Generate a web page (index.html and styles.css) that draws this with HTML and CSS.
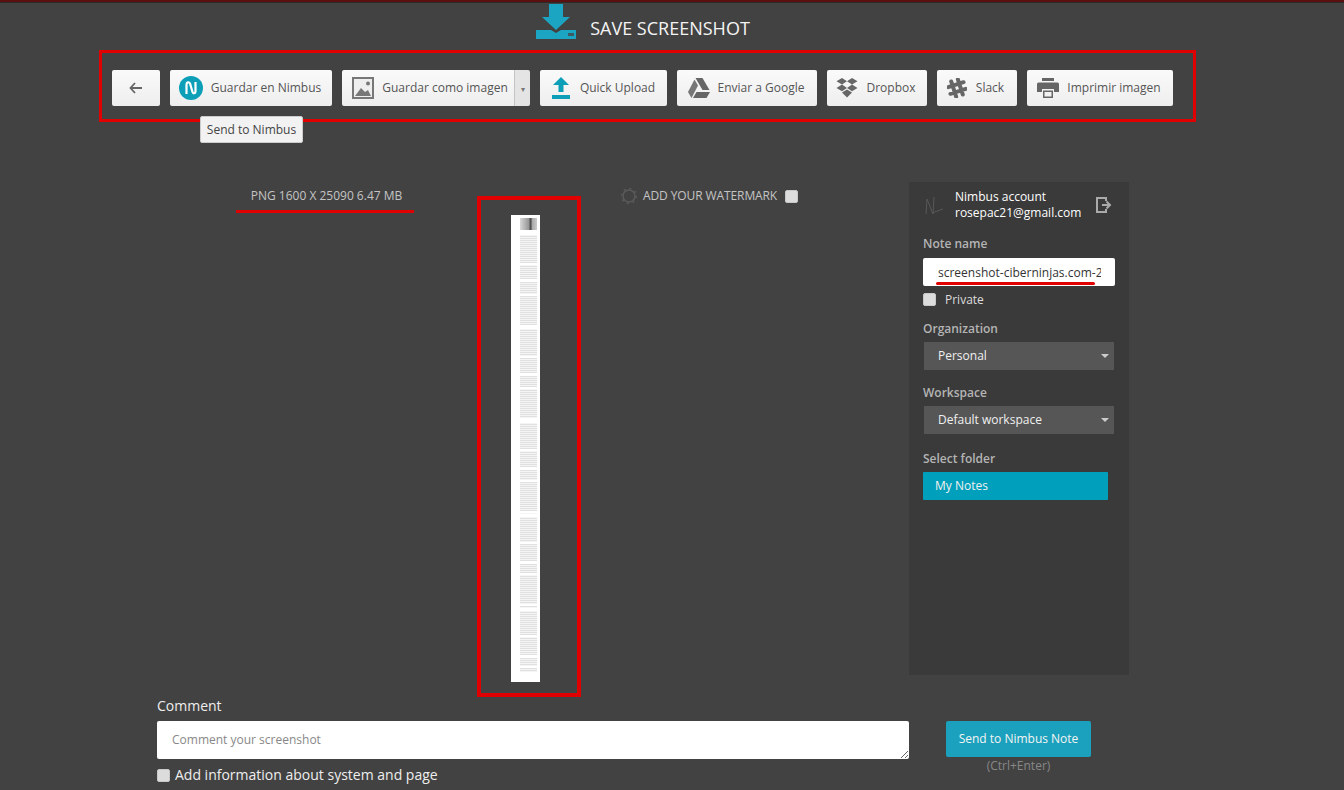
FILE: index.html
```html
<!DOCTYPE html>
<html lang="en">
<head>
    <meta charset="UTF-8">
    <meta name="viewport" content="width=device-width, initial-scale=1.0">
    <title>Save Screenshot</title>
    <link rel="stylesheet" href="styles.css">
</head>
<body>
    <div class="topline"></div>

    <header class="page-head">
        <svg class="head-icon" viewBox="0 0 40 36" width="40" height="36">
            <path d="M13 0h14v13h7L20 26 6 13h7z" fill="#1ba5c3"/>
            <path d="M0 26h15l5 3 5-3h15v9H0z" fill="#1ba5c3"/>
            <rect x="32" y="29" width="6" height="3" fill="#3c5a62"/>
        </svg>
        <h1>SAVE SCREENSHOT</h1>
    </header>

    <nav class="toolbar">
        <button class="btn btn-back">
            <svg viewBox="0 0 14 12" width="14" height="12"><path d="M6 1L1.500 6 6 11M2 6h11" fill="none" stroke="#666" stroke-width="1.800"/></svg>
        </button>
        <div class="tip-wrap">
            <button class="btn btn-nimbus">
                <svg viewBox="0 0 24 24" width="24" height="24">
                    <circle cx="12" cy="12" r="12" fill="#0d9fb8"/>
                    <path d="M7.500 18V8.500c0-2.500 2.500-3 3.500-1l2.500 8.500c.6 2 3 1.500 3-.5V6" fill="none" stroke="#fff" stroke-width="2.200"/>
                </svg>
                Guardar en Nimbus
            </button>
            <span class="tooltip">Send to Nimbus</span>
        </div>
        <div class="btn-split">
            <button class="btn btn-image">
                <svg viewBox="0 0 22 22" width="22" height="22">
                    <path d="M0 0h22v22H0z" fill="#777"/>
                    <path d="M2 2h18v18H2z" fill="#eee"/>
                    <path d="M3 19l6-8 4 4 3-2 3 6z" fill="#777"/>
                    <circle cx="16" cy="6.500" r="2" fill="#777"/>
                </svg>
                Guardar como imagen
            </button>
            <button class="btn-caret">&#9662;</button>
        </div>
        <button class="btn btn-upload">
            <svg viewBox="0 0 18 22" width="18" height="22"><path d="M9 0l8 8h-5.500v7h-5V8H1z" fill="#0d9fb8"/><rect y="18" width="18" height="4" fill="#0d9fb8"/></svg>
            Quick Upload
        </button>
        <button class="btn btn-google">
            <svg viewBox="0 0 22 20" width="22" height="20">
                <path d="M7.500 0h7l7 12h-7z" fill="#666"/>
                <path d="M6.500 1.500L10 7.500 3.500 20 0 14z" fill="#777"/>
                <path d="M5 20l3.500-6H22l-3.500 6z" fill="#666"/>
            </svg>
            Enviar a Google
        </button>
        <button class="btn btn-dropbox">
            <svg viewBox="0 0 22 20" width="22" height="20">
                <path d="M6 0l5 3.300-5 3.300-5.500-3.300zM16 0l5.500 3.300-5.500 3.300-5-3.300zM6 6.600l5 3.300-5 3.300-5.500-3.300zM16 6.600l5.500 3.300-5.500 3.300-5-3.300zM6 14.500l5-3 5 3-5 5z" fill="#666"/>
            </svg>
            Dropbox
        </button>
        <button class="btn btn-slack">
            <svg viewBox="0 0 20 20" width="20" height="20">
                <g transform="rotate(-18 10 10)" fill="none" stroke="#666" stroke-width="4" stroke-linecap="round">
                    <path d="M6.500 2v16M13.500 2v16M2 6.500h16M2 13.500h16"/>
                </g>
            </svg>
            Slack
        </button>
        <button class="btn btn-print">
            <svg viewBox="0 0 22 20" width="22" height="20">
                <path d="M5 0h12v3H5z" fill="#666"/>
                <path d="M1.500 4.500h19a1.500 1.500 0 0 1 1.500 1.500v8h-5v-3H5v3H0V6a1.500 1.500 0 0 1 1.500-1.500z" fill="#666"/>
                <path d="M6 12.500h10V20H6z" fill="#666"/>
                <path d="M7.500 14h7v4.500h-7z" fill="#f2f2f2"/>
            </svg>
            Imprimir imagen
        </button>
    </nav>

    <main class="workspace">
        <div class="file-info">
            <span>PNG 1600 X 25090 6.47 MB</span>
        </div>

        <div class="preview">
            <div class="thumb">
                <div class="thumb-hero"></div>
                <div class="thumb-text"></div>
            </div>
        </div>

        <div class="watermark">
            <svg viewBox="0 0 16 16" width="16" height="16">
                <circle cx="8" cy="8" r="6" fill="none" stroke="#5a5a5a" stroke-width="1.500"/>
                <circle cx="8" cy="8" r="7.500" fill="none" stroke="#5a5a5a" stroke-width="1.500" stroke-dasharray="2 3.900"/>
            </svg>
            <span>ADD YOUR WATERMARK</span>
            <input type="checkbox" class="check">
        </div>

        <aside class="panel">
            <div class="account">
                <svg class="avatar" viewBox="0 0 22 22" width="22" height="22">
                    <path d="M3 19L4 4l6 15 1-17M9 18l11-4" fill="none" stroke="#585858" stroke-width="1"/>
                </svg>
                <div class="account-name">Nimbus account<br>rosepac21@gmail.com</div>
                <svg class="logout" viewBox="0 0 16 16" width="16" height="16">
                    <path d="M10 4V1H1v14h9v-3" fill="none" stroke="#aaa" stroke-width="2"/>
                    <path d="M6 8h7M10.500 4.500L14 8l-3.500 3.500" fill="none" stroke="#aaa" stroke-width="2"/>
                </svg>
            </div>

            <label class="field-label label-note">Note name</label>
            <div class="note-wrap">
                <input class="note-input" type="text" value="screenshot-ciberninjas.com-2">
                <span class="note-underline"></span>
            </div>
            <label class="private"><input type="checkbox" class="check">Private</label>

            <label class="field-label label-org">Organization</label>
            <div class="select">Personal</div>

            <label class="field-label label-space">Workspace</label>
            <div class="select">Default workspace</div>

            <label class="field-label label-folder">Select folder</label>
            <div class="folder">My Notes</div>
        </aside>
    </main>

    <section class="comment-row">
        <div class="comment-col">
            <label class="comment-label">Comment</label>
            <textarea class="comment-input" placeholder="Comment your screenshot"></textarea>
            <label class="add-info"><input type="checkbox" class="check">Add information about system and page</label>
        </div>
        <div class="send-col">
            <button class="send-btn">Send to Nimbus Note</button>
            <div class="send-hint">(Ctrl+Enter)</div>
        </div>
    </section>
</body>
</html>
```

FILE: styles.css
```css
/* General */
body {
    margin: 0;
    height: 790px;
    overflow: hidden;
    background-color: #424242;
    color: #fff;
    font-family: "Open Sans", Arial, sans-serif;
    font-size: 13px;
}

button {
    font-family: inherit;
}

.topline {
    height: 2px;
    background-color: #5c0f0f;
    border-bottom: 1px solid #2c2c2c;
}

/* Header */
.page-head {
    height: 47px;
    display: flex;
    justify-content: center;
    padding-right: 58px;
    box-sizing: border-box;
    gap: 14px;
}

.head-icon {
    margin-top: 1px;
}

.page-head h1 {
    margin: 13px 0 0;
    font-size: 18px;
    line-height: 24px;
    font-weight: 400;
    color: #f4f4f4;
}

/* Toolbar */
.toolbar {
    margin-left: 99px;
    width: 1097px;
    height: 72px;
    box-sizing: border-box;
    border: 3px solid #e00000;
    padding: 17px 10px;
    display: flex;
    gap: 10px;
}

.btn {
    height: 36px;
    display: flex;
    align-items: center;
    justify-content: center;
    gap: 8px;
    padding: 0 0 1px;
    border: none;
    border-radius: 2px;
    background: linear-gradient(#fafafa, #eeeeee);
    color: #555;
    font-size: 12px;
    white-space: nowrap;
}

.btn-back { width: 48px; }
.btn-nimbus { width: 162px; padding-right: 2px; }
.btn-image { width: 172px; padding-left: 4px; border-radius: 2px 0 0 2px; }
.btn-upload { width: 127px; gap: 10px; }
.btn-google { width: 140px; padding-right: 2px; }
.btn-dropbox { width: 100px; padding-right: 2px; }
.btn-slack { width: 80px; padding-right: 3px; gap: 9px; }
.btn-print { width: 146px; padding-right: 2px; }

.btn-split {
    display: flex;
}

.btn-caret {
    width: 16px;
    height: 36px;
    padding: 0;
    border: none;
    border-left: 1px solid #c4c4c4;
    border-radius: 0 2px 2px 0;
    background: #e4e4e4;
    color: #777;
    font-size: 8px;
}

/* Tooltip */
.tip-wrap {
    position: relative;
}

.tooltip {
    position: absolute;
    top: 46px;
    left: 30px;
    width: 103px;
    height: 27px;
    box-sizing: border-box;
    background-color: #f2f2f2;
    border: 1px solid #ccc;
    border-radius: 2px;
    color: #444;
    font-size: 12px;
    line-height: 25px;
    text-align: center;
}

/* Main area */
.workspace {
    height: 578px;
    padding-left: 236px;
    display: flex;
    align-items: flex-start;
}

.file-info {
    width: 178px;
    height: 27px;
    margin-top: 61px;
    margin-right: 63px;
    border-bottom: 3px solid #e00000;
    text-align: center;
    color: #c4c4c4;
    font-size: 12px;
    line-height: 26px;
}

.file-info span {
    margin-left: 3px;
}

.preview {
    width: 104px;
    height: 501px;
    box-sizing: border-box;
    margin-top: 74px;
    border: 4px solid #e00000;
    padding: 15px 0 0 30px;
}

.thumb {
    width: 29px;
    height: 467px;
    background-color: #fff;
    padding: 3px 3px 0 9px;
    box-sizing: border-box;
}

.thumb-hero {
    height: 12px;
    margin: 0 0 2px;
    background: linear-gradient(90deg, #d8d8d8, #999 50%, #444 64%, #aaa 72%, #ccc);
}

.thumb-text {
    height: 440px;
    background:
        repeating-linear-gradient(#fff 0 2px, transparent 2px 31px),
        repeating-linear-gradient(#fff 0 3px, transparent 3px 47px),
        repeating-linear-gradient(#e0e0e0 0 1px, #f5f5f5 1px 2px);
}

.watermark {
    width: 288px;
    margin-top: 65px;
    margin-left: 40px;
    display: flex;
    align-items: center;
    color: #c4c4c4;
    font-size: 12px;
    line-height: 18px;
}

.watermark span {
    margin-left: 6px;
    margin-right: 8px;
    letter-spacing: -0.1px;
}

.check {
    appearance: none;
    width: 13px;
    height: 13px;
    margin: 0;
    background-color: #dcdcdc;
    border: 1px solid #c8c8c8;
    border-radius: 2px;
    box-sizing: border-box;
}

/* Side panel */
.panel {
    width: 220px;
    height: 493px;
    box-sizing: border-box;
    margin-top: 60px;
    padding: 0 14px;
    background-color: #3a3a3a;
}

.account {
    display: flex;
    align-items: flex-start;
    height: 48px;
    padding-top: 7px;
    box-sizing: border-box;
}

.avatar {
    margin-top: 6px;
    margin-right: 10px;
}

.account-name {
    width: 141px;
    font-size: 12px;
    line-height: 16px;
    white-space: nowrap;
}

.logout {
    margin-top: 8px;
}

.field-label {
    display: block;
    color: #b4b4b4;
    font-size: 12px;
    font-weight: 600;
    line-height: 18px;
}

.label-note { margin-top: 5px; }
.label-org { margin-top: 11px; }
.label-space { margin-top: 14px; }
.label-folder { margin-top: 16px; }

.note-wrap {
    position: relative;
    margin-top: 5px;
}

.note-input {
    display: block;
    width: 192px;
    height: 28px;
    box-sizing: border-box;
    padding: 0 14px 0 15px;
    border: none;
    border-radius: 2px;
    background-color: #fff;
    color: #333;
    font-family: inherit;
    font-size: 12px;
}

.note-underline {
    position: absolute;
    left: 13px;
    top: 24px;
    width: 159px;
    height: 3px;
    background-color: #e00000;
    border-radius: 2px;
}

.private {
    display: flex;
    align-items: center;
    gap: 9px;
    height: 20px;
    margin-top: 3px;
    color: #ddd;
    font-size: 12px;
}

.select {
    position: relative;
    width: 190px;
    height: 28px;
    margin: 4px 0 0 1px;
    padding-left: 14px;
    box-sizing: border-box;
    background-color: #565656;
    color: #f0f0f0;
    font-size: 12px;
    line-height: 27px;
}

.select::after {
    content: "";
    position: absolute;
    right: 5px;
    top: 12px;
    border-left: 4px solid transparent;
    border-right: 4px solid transparent;
    border-top: 4px solid #ccc;
}

.folder {
    width: 185px;
    height: 28px;
    margin-top: 4px;
    padding-left: 12px;
    box-sizing: border-box;
    border-radius: 1px;
    background-color: #00a0bc;
    color: #f0f0f0;
    font-size: 12px;
    line-height: 27px;
}

/* Comment */
.comment-row {
    padding-left: 157px;
    display: flex;
    gap: 37px;
}

.comment-col {
    width: 752px;
}

.comment-label {
    display: block;
    height: 24px;
    font-size: 14px;
    line-height: 18px;
    color: #eee;
    margin-top: -3px;
}

.comment-input {
    display: block;
    width: 752px;
    height: 38px;
    box-sizing: border-box;
    padding: 10px 15px;
    border: none;
    border-radius: 2px;
    background-color: #fff;
    font-family: inherit;
    font-size: 12px;
}

.comment-input::placeholder {
    color: #888;
}

.add-info {
    display: flex;
    align-items: center;
    gap: 5px;
    margin-top: 7px;
    font-size: 14px;
    line-height: 18px;
    color: #eee;
}

.send-col {
    width: 145px;
    padding-top: 21px;
    text-align: center;
}

.send-btn {
    display: block;
    width: 145px;
    height: 36px;
    padding: 0 0 2px;
    border: none;
    border-radius: 2px;
    background-color: #1ba1bd;
    color: #f4f4f4;
    font-size: 12px;
    font-weight: 500;
}

.send-hint {
    margin-top: 1px;
    color: #888;
    font-size: 12px;
    line-height: 16px;
}
```
